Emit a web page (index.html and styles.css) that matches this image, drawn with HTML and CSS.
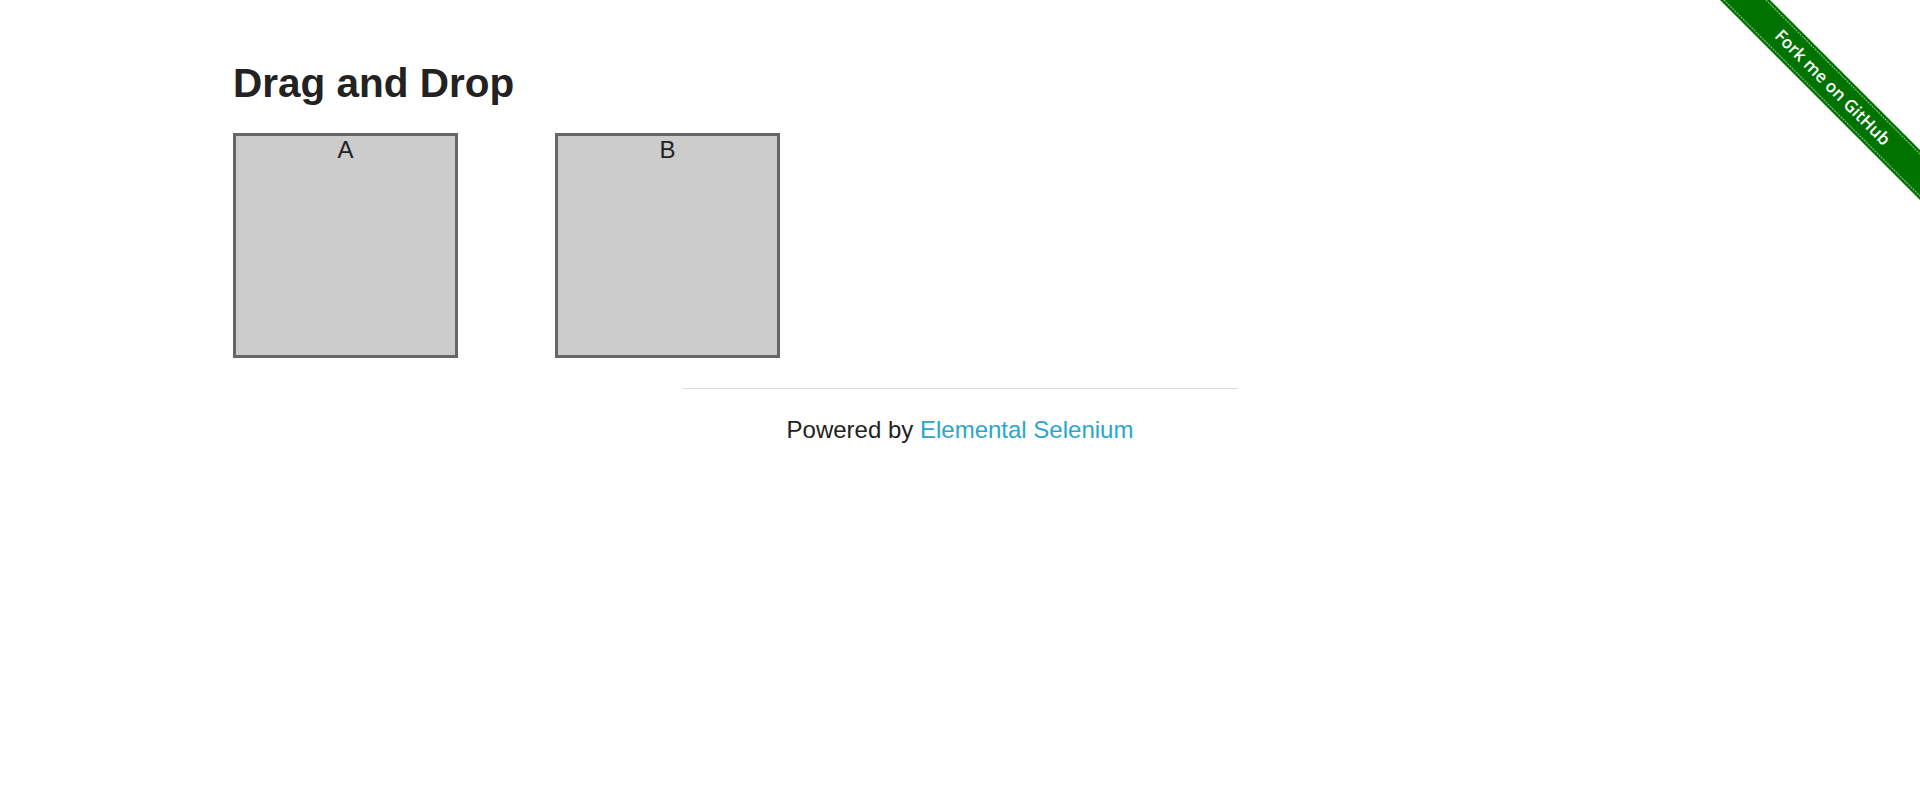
FILE: index.html
```html
<!DOCTYPE html>
<html lang="en">
<head>
<meta charset="utf-8">
<title>The Internet</title>
<link rel="stylesheet" href="styles.css">
</head>
<body>
<a class="forkme" href="#" aria-label="Fork me on GitHub">
  <svg class="ribbon" width="200" height="200" viewBox="0 0 200 200">
    <polygon points="0,0 50,0 200,150 200,200" fill="#007200"/>
    <line x1="4" y1="0" x2="200" y2="196" stroke="rgba(255,255,255,0.5)" stroke-width="1.2" stroke-dasharray="2 1"/>
    <line x1="46" y1="0" x2="200" y2="154" stroke="rgba(255,255,255,0.5)" stroke-width="1.2" stroke-dasharray="2 1"/>
    <text x="113" y="87" transform="rotate(45 113 87)" class="ribbon-text" text-anchor="middle" dominant-baseline="central">Fork me on GitHub</text>
  </svg>
</a>
<div class="row">
  <div class="example">
    <h3 class="title">Drag and Drop</h3>
    <div class="columns">
      <div class="column"><header>A</header></div>
      <div class="column"><header>B</header></div>
    </div>
  </div>
</div>
<div class="footer">
  <hr class="rule">
  <div class="powered">Powered by <a href="#" class="link">Elemental Selenium</a></div>
</div>
</body>
</html>
```
FILE: styles.css
```css
html, body {
  margin: 0;
  padding: 0;
  background: #ffffff;
}
body {
  font-family: "Liberation Sans", Arial, Helvetica, sans-serif;
  color: #222222;
}
.forkme {
  position: absolute;
  top: 0;
  right: 0;
  display: block;
  width: 200px;
  height: 200px;
}
.ribbon {
  display: block;
}
.ribbon-text {
  fill: #ffffff;
  font-family: "Open Sans", "DejaVu Sans", sans-serif;
  font-weight: 600;
  font-size: 17px;
}
.row {
  max-width: 1500px;
  margin: 0 auto;
  padding: 0 23px;
  box-sizing: border-box;
}
.example {
  padding-top: 60px;
}
.title {
  margin: 0 0 27px;
  font-size: 40.5px;
  line-height: 46px;
  font-weight: 700;
  color: #222222;
}
.columns {
  display: flex;
  gap: 97px;
}
.column {
  width: 225px;
  height: 225px;
  box-sizing: border-box;
  border: 3px solid #666666;
  background: #cccccc;
  text-align: center;
  font-size: 24px;
  line-height: 28px;
  color: #222222;
}
.column header {
  padding-top: 0;
}
.footer {
  padding-top: 30px;
}
.rule {
  width: 555px;
  margin: 0 auto;
  border: 0;
  border-top: 1px solid #dddddd;
  height: 0;
}
.powered {
  text-align: center;
  font-size: 24px;
  line-height: 28px;
  margin-top: 27px;
}
.link {
  color: #2ba6cb;
  text-decoration: none;
}
```
